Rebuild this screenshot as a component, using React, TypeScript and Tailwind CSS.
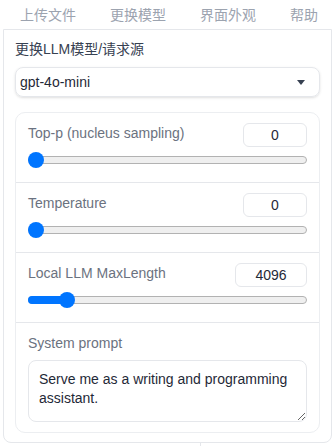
const tabs = ["上传文件", "更换模型", "界面外观", "帮助"];

const sliders = [
  { label: "Top-p (nucleus sampling)", value: "0", pct: 0, wide: false },
  { label: "Temperature", value: "0", pct: 0, wide: false },
  { label: "Local LLM MaxLength", value: "4096", pct: 14, wide: true },
];

function Slider({ pct }: { pct: number }) {
  return (
    <div className="relative mt-[5px] h-4 flex items-center">
      <div className="relative w-full h-[8px] rounded-full bg-[#efefef] border border-[#b2b2b2]">
        {pct > 0 && (
          <div
            className="absolute -left-px -top-px h-[8px] rounded-full bg-[#0075ff]"
            style={{ width: `${pct}%` }}
          />
        )}
      </div>
      <div
        className="absolute top-0 w-4 h-4 rounded-full bg-[#0075ff]"
        style={{ left: `calc(${pct}% - ${pct > 0 ? 8 : 0}px)` }}
      />
    </div>
  );
}

export default function App() {
  return (
    <div className="w-[334px] h-[446px] bg-white font-['Liberation_Sans','Noto_Sans_CJK_SC',sans-serif] overflow-hidden">
      {/* Tabs */}
      <div className="flex h-[29px] items-center pl-[3px] whitespace-nowrap">
        {tabs.map((t) => (
          <div key={t} className="shrink-0 px-[17px] text-[14px] text-[#9ca3af] leading-[20px]">
            {t}
          </div>
        ))}
      </div>

      {/* Panel */}
      <div className="ml-[3px] w-[329px] border border-[#e5e7eb] rounded-b-lg px-[11px] pt-[9px] pb-[9px]">
        <div className="text-[14px] leading-[20px] text-[#374151]">更换LLM模型/请求源</div>
        <div className="mt-[8px] h-[30px] rounded-lg border border-[#e5e7eb] shadow-sm flex items-center justify-between pl-[4px] pr-[14px]">
          <span className="text-[14px] text-[#1f2937]">gpt-4o-mini</span>
          <svg width="8" height="5" viewBox="0 0 8 5">
            <path d="M0 0h8L4 5z" fill="#374151" />
          </svg>
        </div>

        {/* Settings card */}
        <div className="mt-[15px] rounded-[10px] border border-[#eceef1] bg-white">
          {sliders.map((s) => (
            <div key={s.label} className="border-b border-[#e5e7eb] px-[12px] pt-[10px] pb-[14px]">
              <div className="flex items-start justify-between h-[24px]">
                <span className="text-[14px] leading-[20px] text-[#6b7280]">{s.label}</span>
                <div
                  className={`${s.wide ? "w-[72px]" : "w-[64px]"} h-[24px] rounded-md border border-[#e5e7eb] flex items-center justify-center text-[14px] text-[#1f2937]`}
                >
                  {s.value}
                </div>
              </div>
              <Slider pct={s.pct} />
            </div>
          ))}
          <div className="px-[12px] pt-[10px] pb-[10px]">
            <div className="text-[14px] leading-[20px] text-[#6b7280]">System prompt</div>
            <textarea
              readOnly
              defaultValue="Serve me as a writing and programming assistant."
              className="mt-[7px] block w-full h-[62px] rounded-lg border border-[#e5e7eb] px-[10px] py-[9px] text-[14px] leading-[19px] text-[#1f2937] outline-none"
            />
          </div>
        </div>
      </div>
      <div className="ml-[200px] h-[3px] border-l border-[#e5e7eb]" />
    </div>
  );
}
